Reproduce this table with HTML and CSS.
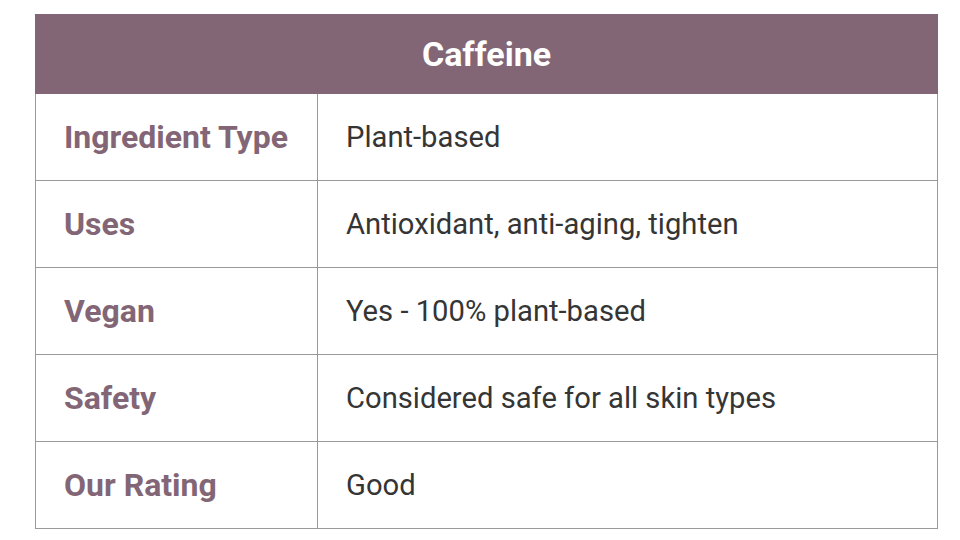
FILE: index.html
```html
<!DOCTYPE html>
<html>
<head>
<meta charset="utf-8">
<link rel="stylesheet" href="styles.css">
</head>
<body>
<div class="wrap">
<table class="info">
  <colgroup><col class="col-label"><col class="col-value"></colgroup>
  <thead>
    <tr><th colspan="2" class="title">Caffeine</th></tr>
  </thead>
  <tbody>
    <tr><td class="label">Ingredient Type</td><td class="value">Plant-based</td></tr>
    <tr><td class="label">Uses</td><td class="value">Antioxidant, anti-aging, tighten</td></tr>
    <tr><td class="label">Vegan</td><td class="value">Yes - 100% plant-based</td></tr>
    <tr><td class="label">Safety</td><td class="value">Considered safe for all skin types</td></tr>
    <tr><td class="label">Our Rating</td><td class="value">Good</td></tr>
  </tbody>
</table>
</div>
</body>
</html>
```

FILE: styles.css
```css
html, body {
  margin: 0;
  padding: 0;
  background: #ffffff;
}
.wrap {
  padding: 14px 0 0 35px;
}
.info {
  width: 903px;
  border-collapse: collapse;
  font-family: Roboto, "Liberation Sans", sans-serif;
  table-layout: fixed;
}
.col-label {
  width: 282px;
}
.title {
  background: #836676;
  color: #ffffff;
  font-weight: 700;
  font-size: 34px;
  height: 78px;
  padding: 0;
  text-align: center;
  border: 1px solid #836676;
}
.info td {
  border: 1px solid #9a9a9a;
  height: 87px;
  padding: 0 0 0 28px;
  box-sizing: border-box;
  vertical-align: middle;
}
.label {
  color: #836676;
  font-weight: 700;
  font-size: 32px;
}
.value {
  color: #353535;
  font-size: 29.2px;
}
```
